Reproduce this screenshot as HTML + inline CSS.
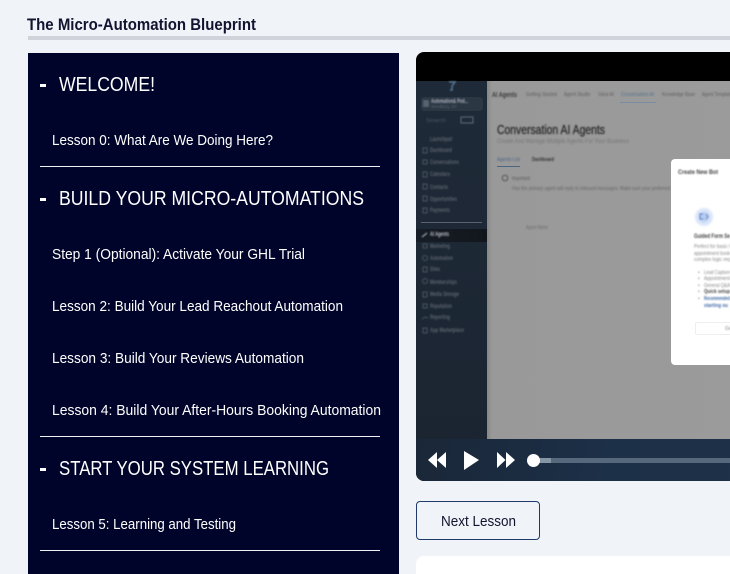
<!DOCTYPE html>
<html><head><meta charset="utf-8"><style>
html,body{margin:0;padding:0;width:730px;height:574px;overflow:hidden;background:#f0f3f8;font-family:"Liberation Sans",sans-serif}
#p{position:relative;width:730px;height:574px;overflow:hidden}
.a{position:absolute}
svg{position:absolute;left:0;top:0}
</style></head><body><div id="p">
<div class="a" style="left:28px;top:36px;width:702px;height:4px;background:#d0d3da"></div>
<div class="a" style="left:28px;top:53px;width:371px;height:521px;background:#01042a"></div>
<div class="a" style="left:40px;top:166px;width:340px;height:1px;background:#f0f2f6"></div>
<div class="a" style="left:40px;top:436px;width:340px;height:1px;background:#f0f2f6"></div>
<div class="a" style="left:40px;top:550px;width:340px;height:1px;background:#f0f2f6"></div>
<div class="a" style="left:40px;top:84px;width:6px;height:3px;background:#fff"></div>
<div class="a" style="left:40px;top:198px;width:6px;height:3px;background:#fff"></div>
<div class="a" style="left:40px;top:468px;width:6px;height:3px;background:#fff"></div>

<!-- video -->
<div class="a" style="left:416px;top:52px;width:330px;height:429px;border-radius:8px 0 0 8px;overflow:hidden;background:#000">
  <div class="a" style="left:0;top:29px;width:71px;height:358px;background:linear-gradient(#1f2a38,#1b2532)"></div>
  <div class="a" style="left:71px;top:29px;width:259px;height:358px;background:linear-gradient(90deg,#868686,#999 5px,#9b9b9b)"></div>
  <div class="a" style="left:0;top:387px;width:330px;height:42px;background:linear-gradient(100deg,#1a2738,#1c3048 60%,#1f3048)"></div>
  <div class="a" style="left:0;top:177px;width:71px;height:13px;background:linear-gradient(90deg,#171d26,#12161c)"></div>
  <div class="a" style="left:5px;top:45px;width:62px;height:14px;background:#2c3744;border-radius:3px"></div>
  <div class="a" style="left:5px;top:170px;width:61px;height:1px;background:#5b6470"></div>
  <div class="a" style="left:204px;top:50px;width:36px;height:1px;background:#7a8da0"></div>
  <div class="a" style="left:81px;top:114px;width:23px;height:1px;background:#4d6585"></div>
  <div class="a" style="left:255px;top:107px;width:80px;height:206px;background:#fff;border-radius:4px"></div>
  <div class="a" style="left:279px;top:156px;width:18px;height:18px;border-radius:50%;background:#dbe6fa;filter:blur(1px)"></div>
  <div class="a" style="left:283px;top:160px;width:10px;height:10px;border-radius:50%;background:#b9ccef;filter:blur(1px)"></div>
  <div class="a" style="left:279px;top:270px;width:60px;height:11px;border:1px solid #eee;border-radius:2px"></div>
  <!-- progress -->
  <div class="a" style="left:117px;top:406px;width:213px;height:5px;background:#56687c"></div>
  <div class="a" style="left:117px;top:406px;width:18px;height:5px;background:#8695a3"></div>
  <div class="a" style="left:111px;top:402px;width:13px;height:13px;border-radius:50%;background:#fff"></div>
</div>
<svg width="730" height="574" viewBox="0 0 730 574">
  <g fill="#fff">
    <path d="M428 460 L437 452 V468Z M437 460 L446 452 V468Z"/>
    <path d="M464 451 L479 460 L464 470Z"/>
    <path d="M515 460 L506 452 V468Z M497 452 L505.500 460 L497 468Z"/>
  </g>
  <g style="filter:blur(.7px)">
    <g fill="none" stroke="#4d5662" stroke-width="1">
      <rect x="423" y="148" width="4" height="5"/><rect x="423" y="160" width="4" height="4"/><rect x="423" y="172" width="4" height="5"/><rect x="423" y="184" width="4" height="5"/><rect x="423" y="196" width="4" height="5"/><rect x="423" y="208" width="4" height="5"/>
      <rect x="423" y="244" width="4" height="4"/><circle cx="425" cy="258" r="2.500"/><rect x="423" y="267" width="4" height="5"/><circle cx="425" cy="281" r="2.500"/><rect x="423" y="292" width="4" height="5"/><rect x="423" y="304" width="4" height="4"/><path d="M422 319 l3 -2 l3 1"/><rect x="423" y="328" width="4" height="5"/>
      <rect x="461" y="117" width="12" height="6" stroke="#66707c"/>
    </g>
    <rect x="423" y="100" width="6" height="7" fill="#59636f"/>
    <g fill="#59626d" font-size="6" font-weight="bold">
      <text x="430" y="141" textLength="22" lengthAdjust="spacingAndGlyphs">Launchpad</text>
      <text x="430" y="152" textLength="22" lengthAdjust="spacingAndGlyphs">Dashboard</text>
      <text x="430" y="164" textLength="29" lengthAdjust="spacingAndGlyphs">Conversations</text>
      <text x="430" y="176" textLength="20" lengthAdjust="spacingAndGlyphs">Calendars</text>
      <text x="430" y="189" textLength="18" lengthAdjust="spacingAndGlyphs">Contacts</text>
      <text x="430" y="201" textLength="27" lengthAdjust="spacingAndGlyphs">Opportunities</text>
      <text x="430" y="212" textLength="20" lengthAdjust="spacingAndGlyphs">Payments</text>
      <text x="430" y="248" textLength="20" lengthAdjust="spacingAndGlyphs">Marketing</text>
      <text x="430" y="260" textLength="23" lengthAdjust="spacingAndGlyphs">Automation</text>
      <text x="430" y="271" textLength="10" lengthAdjust="spacingAndGlyphs">Sites</text>
      <text x="430" y="284" textLength="27" lengthAdjust="spacingAndGlyphs">Memberships</text>
      <text x="430" y="296" textLength="29" lengthAdjust="spacingAndGlyphs">Media Storage</text>
      <text x="430" y="308" textLength="22" lengthAdjust="spacingAndGlyphs">Reputation</text>
      <text x="430" y="319" textLength="20" lengthAdjust="spacingAndGlyphs">Reporting</text>
      <text x="430" y="332" textLength="34" lengthAdjust="spacingAndGlyphs">App Marketplace</text>
    </g>
    <text x="430" y="236" fill="#b9bec5" font-size="6" font-weight="bold" textLength="19" lengthAdjust="spacingAndGlyphs">AI Agents</text>
    <text x="431" y="103" fill="#aab1ba" font-size="6" font-weight="bold" textLength="37" lengthAdjust="spacingAndGlyphs">Automation&amp; Pod...</text>
    <text x="431" y="108" fill="#5d6671" font-size="4.500" textLength="26" lengthAdjust="spacingAndGlyphs">Woodbury, NY</text>
    <text x="426" y="122" fill="#4d5662" font-size="5" textLength="20" lengthAdjust="spacingAndGlyphs">Search</text>
    <text x="492" y="97" fill="#3a3a3a" font-size="7" font-weight="bold" textLength="25" lengthAdjust="spacingAndGlyphs">AI Agents</text>
    <g fill="#5d5d5d" font-size="5.500">
      <text x="526" y="96" textLength="31" lengthAdjust="spacingAndGlyphs">Getting Started</text>
      <text x="564" y="96" textLength="26" lengthAdjust="spacingAndGlyphs">Agent Studio</text>
      <text x="598" y="96" textLength="16" lengthAdjust="spacingAndGlyphs">Voice AI</text>
      <text x="662" y="96" textLength="33" lengthAdjust="spacingAndGlyphs">Knowledge Base</text>
      <text x="702" y="96" textLength="30" lengthAdjust="spacingAndGlyphs">Agent Template</text>
    </g>
    <text x="621" y="96" fill="#51708a" font-size="5.500" textLength="33" lengthAdjust="spacingAndGlyphs">Conversation AI</text>
    <text x="497" y="134" fill="#2b2b2b" stroke="#2b2b2b" stroke-width=".3" font-size="12.500" textLength="108" lengthAdjust="spacingAndGlyphs">Conversation AI Agents</text>
    <text x="497" y="143" fill="#767676" font-size="6.500" textLength="132" lengthAdjust="spacingAndGlyphs">Create And Manage Multiple Agents For Your Business</text>
    <text x="497" y="161" fill="#4d6585" font-size="5.500" textLength="23" lengthAdjust="spacingAndGlyphs">Agents List</text>
    <text x="532" y="161" fill="#333" font-size="5.500" font-weight="bold" textLength="22" lengthAdjust="spacingAndGlyphs">Dashboard</text>
    <circle cx="505" cy="178" r="2.800" fill="none" stroke="#555" stroke-width="1"/>
    <text x="512" y="180" fill="#5a5a5a" font-size="5" textLength="18" lengthAdjust="spacingAndGlyphs">Important</text>
    <text x="512" y="190" fill="#666" font-size="5" textLength="158" lengthAdjust="spacingAndGlyphs">Has the primary agent will reply to inbound messages. Make sure your preferred</text>
    <text x="526" y="229" fill="#6d6d6d" font-size="5" textLength="22" lengthAdjust="spacingAndGlyphs">Agent Name</text>
    <text x="678" y="174" fill="#444" font-size="6" font-weight="bold" textLength="40" lengthAdjust="spacingAndGlyphs">Create New Bot</text>
    <text x="694" y="238" fill="#444" font-size="6" font-weight="bold" textLength="36" lengthAdjust="spacingAndGlyphs">Guided Form Se</text>
    <g fill="#888" font-size="5">
      <text x="694" y="248" textLength="36" lengthAdjust="spacingAndGlyphs">Perfect for basic l</text>
      <text x="694" y="255" textLength="36" lengthAdjust="spacingAndGlyphs">appointment book</text>
      <text x="694" y="261" textLength="36" lengthAdjust="spacingAndGlyphs">complex logic req</text>
      <text x="704" y="274" textLength="26" lengthAdjust="spacingAndGlyphs">Lead Capture</text>
      <text x="704" y="280" textLength="26" lengthAdjust="spacingAndGlyphs">Appointment</text>
      <text x="704" y="287" textLength="26" lengthAdjust="spacingAndGlyphs">General Q&amp;A</text>
      <text x="725" y="330" font-size="5.500">Ge</text>
    </g>
    <text x="704" y="293" fill="#444" font-size="5" font-weight="bold" textLength="26" lengthAdjust="spacingAndGlyphs">Quick setup</text>
    <text x="704" y="300" fill="#3f6aa8" font-size="5" font-weight="bold" textLength="26" lengthAdjust="spacingAndGlyphs">Recommended</text>
    <text x="704" y="307" fill="#3f6aa8" font-size="5" font-weight="bold" textLength="24" lengthAdjust="spacingAndGlyphs">starting ou</text>
    <g fill="#889" font-size="5">
      <text x="698" y="274">•</text><text x="698" y="280">•</text><text x="698" y="287">•</text><text x="698" y="293">•</text><text x="698" y="300">•</text>
    </g>
    <path d="M703 214 h-3 v5 h3 M706 214 l2 2.500 l-2 2.500" fill="none" stroke="#5b82c9" stroke-width="1"/>
    <path d="M449 82 h6 l-3 4 v4 h-2" fill="none" stroke="#5a7691" stroke-width="1.500"/>
    <path d="M422 237 l5 -4" stroke="#c3c8ce" fill="none"/>
  </g>

  <g style="filter:blur(.25px)">
    <text x="27" y="30" font-size="17" font-weight="bold" fill="#11142f" textLength="229" lengthAdjust="spacingAndGlyphs">The Micro-Automation Blueprint</text>
    <g fill="#fff" font-size="20">
      <text x="59" y="91" textLength="96" lengthAdjust="spacingAndGlyphs">WELCOME!</text>
      <text x="59" y="205" textLength="305" lengthAdjust="spacingAndGlyphs">BUILD YOUR MICRO-AUTOMATIONS</text>
      <text x="59" y="475" textLength="270" lengthAdjust="spacingAndGlyphs">START YOUR SYSTEM LEARNING</text>
    </g>
    <g fill="#fff" font-size="15">
      <text x="52" y="145" textLength="221" lengthAdjust="spacingAndGlyphs">Lesson 0: What Are We Doing Here?</text>
      <text x="52" y="259" textLength="253" lengthAdjust="spacingAndGlyphs">Step 1 (Optional): Activate Your GHL Trial</text>
      <text x="52" y="311" textLength="291" lengthAdjust="spacingAndGlyphs">Lesson 2: Build Your Lead Reachout Automation</text>
      <text x="52" y="363" textLength="252" lengthAdjust="spacingAndGlyphs">Lesson 3: Build Your Reviews Automation</text>
      <text x="52" y="415" textLength="329" lengthAdjust="spacingAndGlyphs">Lesson 4: Build Your After-Hours Booking Automation</text>
      <text x="52" y="529" textLength="184" lengthAdjust="spacingAndGlyphs">Lesson 5: Learning and Testing</text>
    </g>
    <text x="441" y="526" fill="#11142f" font-size="15" textLength="75" lengthAdjust="spacingAndGlyphs">Next Lesson</text>
  </g>
</svg>
<div class="a" style="left:416px;top:501px;width:122px;height:37px;border:1px solid #1f3a68;border-radius:4px"></div>
<div class="a" style="left:416px;top:556px;width:314px;height:18px;background:#fff;border-radius:8px 0 0 0"></div>
</div></body></html>
